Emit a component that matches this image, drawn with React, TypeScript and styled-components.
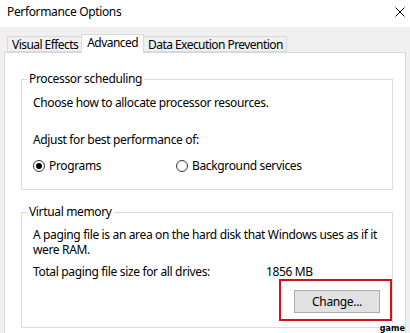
import React from "react";
import styled, { createGlobalStyle } from "styled-components";

const GlobalStyle = createGlobalStyle`
  html, body {
    margin: 0;
    padding: 0;
    background: #f0f0f0;
  }
  body {
    font-family: "Noto Sans", "Liberation Sans", sans-serif;
    font-size: 12px;
    letter-spacing: -0.35px;
    color: #000;
  }
`;

const Window = styled.div`
  position: relative;
  width: 410px;
  height: 333px;
  overflow: hidden;
  display: flex;
  flex-direction: column;
  background: #f0f0f0;
`;

const TitleBar = styled.div`
  height: 27px;
  flex-shrink: 0;
  background: #fff;
  display: flex;
  align-items: center;
  justify-content: space-between;
  padding: 0 5px 3px 7px;
  box-sizing: border-box;
`;

const Title = styled.span`
  font-size: 12px;
  line-height: 16px;
`;

const Body = styled.div`
  flex: 1;
  display: flex;
  flex-direction: column;
  padding: 7px 4px 0 4px;
`;

const TabStrip = styled.div`
  display: flex;
  align-items: flex-end;
  padding-left: 3px;
  height: 18px;
  position: relative;
  z-index: 1;
`;

const Tab = styled.div<{ $active?: boolean }>`
  box-sizing: border-box;
  height: ${(p) => (p.$active ? "19px" : "16px")};
  margin-bottom: ${(p) => (p.$active ? "-1px" : "0")};
  padding: ${(p) => (p.$active ? "1px 5px 0 5px" : "1px 3px 0 4px")};
  background: ${(p) => (p.$active ? "#fff" : "#f0f0f0")};
  border: 1px solid #d9d9d9;
  border-bottom: ${(p) => (p.$active ? "none" : "1px solid #d9d9d9")};
  margin-left: ${(p) => (p.$active ? "-1px" : "0")};
  margin-right: ${(p) => (p.$active ? "-1px" : "0")};
  position: relative;
  z-index: ${(p) => (p.$active ? 2 : 0)};
  line-height: 14px;
  letter-spacing: -0.55px;
  white-space: nowrap;
  & + & {
    border-left: ${(p) => (p.$active ? "1px solid #d9d9d9" : "none")};
  }
`;

const Panel = styled.div`
  flex: 1;
  background: #fff;
  border: 1px solid #d9d9d9;
  border-bottom: none;
  padding: 26px 12px 0 16px;
  display: flex;
  flex-direction: column;
`;

const GroupBox = styled.div<{ $gap?: number }>`
  border: 1px solid #dcdcdc;
  padding: 0 11px ${(p) => p.$gap ?? 14}px 11px;
  display: flex;
  flex-direction: column;
  & + & {
    margin-top: 22px;
  }
`;

const Legend = styled.div`
  width: fit-content;
  margin: -9px 0 0 -6px;
  padding: 0 2px;
  background: #fff;
  line-height: 16px;
`;

const Text = styled.div<{ $top: number }>`
  margin-top: ${(p) => p.$top}px;
  line-height: 16px;
  white-space: nowrap;
`;

const Paragraph = styled.div<{ $top: number }>`
  margin-top: ${(p) => p.$top}px;
  line-height: 15px;
  white-space: nowrap;
`;

const RadioRow = styled.div`
  display: flex;
  margin-top: 10px;
  line-height: 16px;
`;

const Option = styled.label<{ $width?: number }>`
  display: flex;
  align-items: center;
  gap: 4px;
  width: ${(p) => (p.$width ? `${p.$width}px` : "auto")};
`;

const RadioCircle = styled.span<{ $checked?: boolean }>`
  box-sizing: border-box;
  width: 12px;
  height: 12px;
  border-radius: 50%;
  border: 1px solid #333;
  background: #fff;
  display: flex;
  align-items: center;
  justify-content: center;
  &::after {
    content: "";
    width: 6px;
    height: 6px;
    border-radius: 50%;
    background: ${(p) => (p.$checked ? "#000" : "transparent")};
  }
`;

const SizeRow = styled.div`
  display: grid;
  grid-template-columns: 233px auto;
  margin-top: 7px;
  line-height: 15px;
  white-space: nowrap;
`;

const ButtonRow = styled.div`
  display: flex;
  justify-content: flex-end;
  margin-right: -11px;
`;

const Highlight = styled.div`
  border: 2px solid #d0121b;
  padding: 9px 10px 6px 13px;
`;

const Button = styled.button`
  box-sizing: border-box;
  width: 86px;
  height: 23px;
  background: #e1e1e1;
  border: 1px solid #adadad;
  font-family: inherit;
  font-size: 12px;
  letter-spacing: inherit;
  color: #000;
  padding: 0;
`;

const Watermark = styled.span`
  position: absolute;
  right: 5px;
  bottom: 0px;
  font-family: "DejaVu Sans Condensed", "DejaVu Sans", sans-serif;
  font-weight: bold;
  font-size: 9px;
  line-height: 10px;
  letter-spacing: 0;
  color: #000;
  background: #fff;
`;

const CloseIcon = () => (
  <svg width="10" height="10" viewBox="0 0 10 10">
    <path d="M0.5 0.5 L9.5 9.5 M9.5 0.5 L0.5 9.5" stroke="#000" strokeWidth="1" />
  </svg>
);

const App = () => {
  return (
    <>
      <GlobalStyle />
      <Window>
        <TitleBar>
          <Title>Performance Options</Title>
          <CloseIcon />
        </TitleBar>
        <Body>
          <TabStrip>
            <Tab>Visual Effects</Tab>
            <Tab $active>Advanced</Tab>
            <Tab>Data Execution Prevention</Tab>
          </TabStrip>
          <Panel>
            <GroupBox $gap={15}>
              <Legend>Processor scheduling</Legend>
              <Text $top={8}>Choose how to allocate processor resources.</Text>
              <Text $top={21}>Adjust for best performance of:</Text>
              <RadioRow>
                <Option $width={143}>
                  <RadioCircle $checked />
                  Programs
                </Option>
                <Option>
                  <RadioCircle />
                  Background services
                </Option>
              </RadioRow>
            </GroupBox>
            <GroupBox $gap={6}>
              <Legend>Virtual memory</Legend>
              <Paragraph $top={7}>
                A paging file is an area on the hard disk that Windows uses as if it
                <br />
                were RAM.
              </Paragraph>
              <SizeRow>
                <span>Total paging file size for all drives:</span>
                <span>1856 MB</span>
              </SizeRow>
              <ButtonRow>
                <Highlight>
                  <Button>Change...</Button>
                </Highlight>
              </ButtonRow>
            </GroupBox>
          </Panel>
        </Body>
        <Watermark>game</Watermark>
      </Window>
    </>
  );
};

export default App;
